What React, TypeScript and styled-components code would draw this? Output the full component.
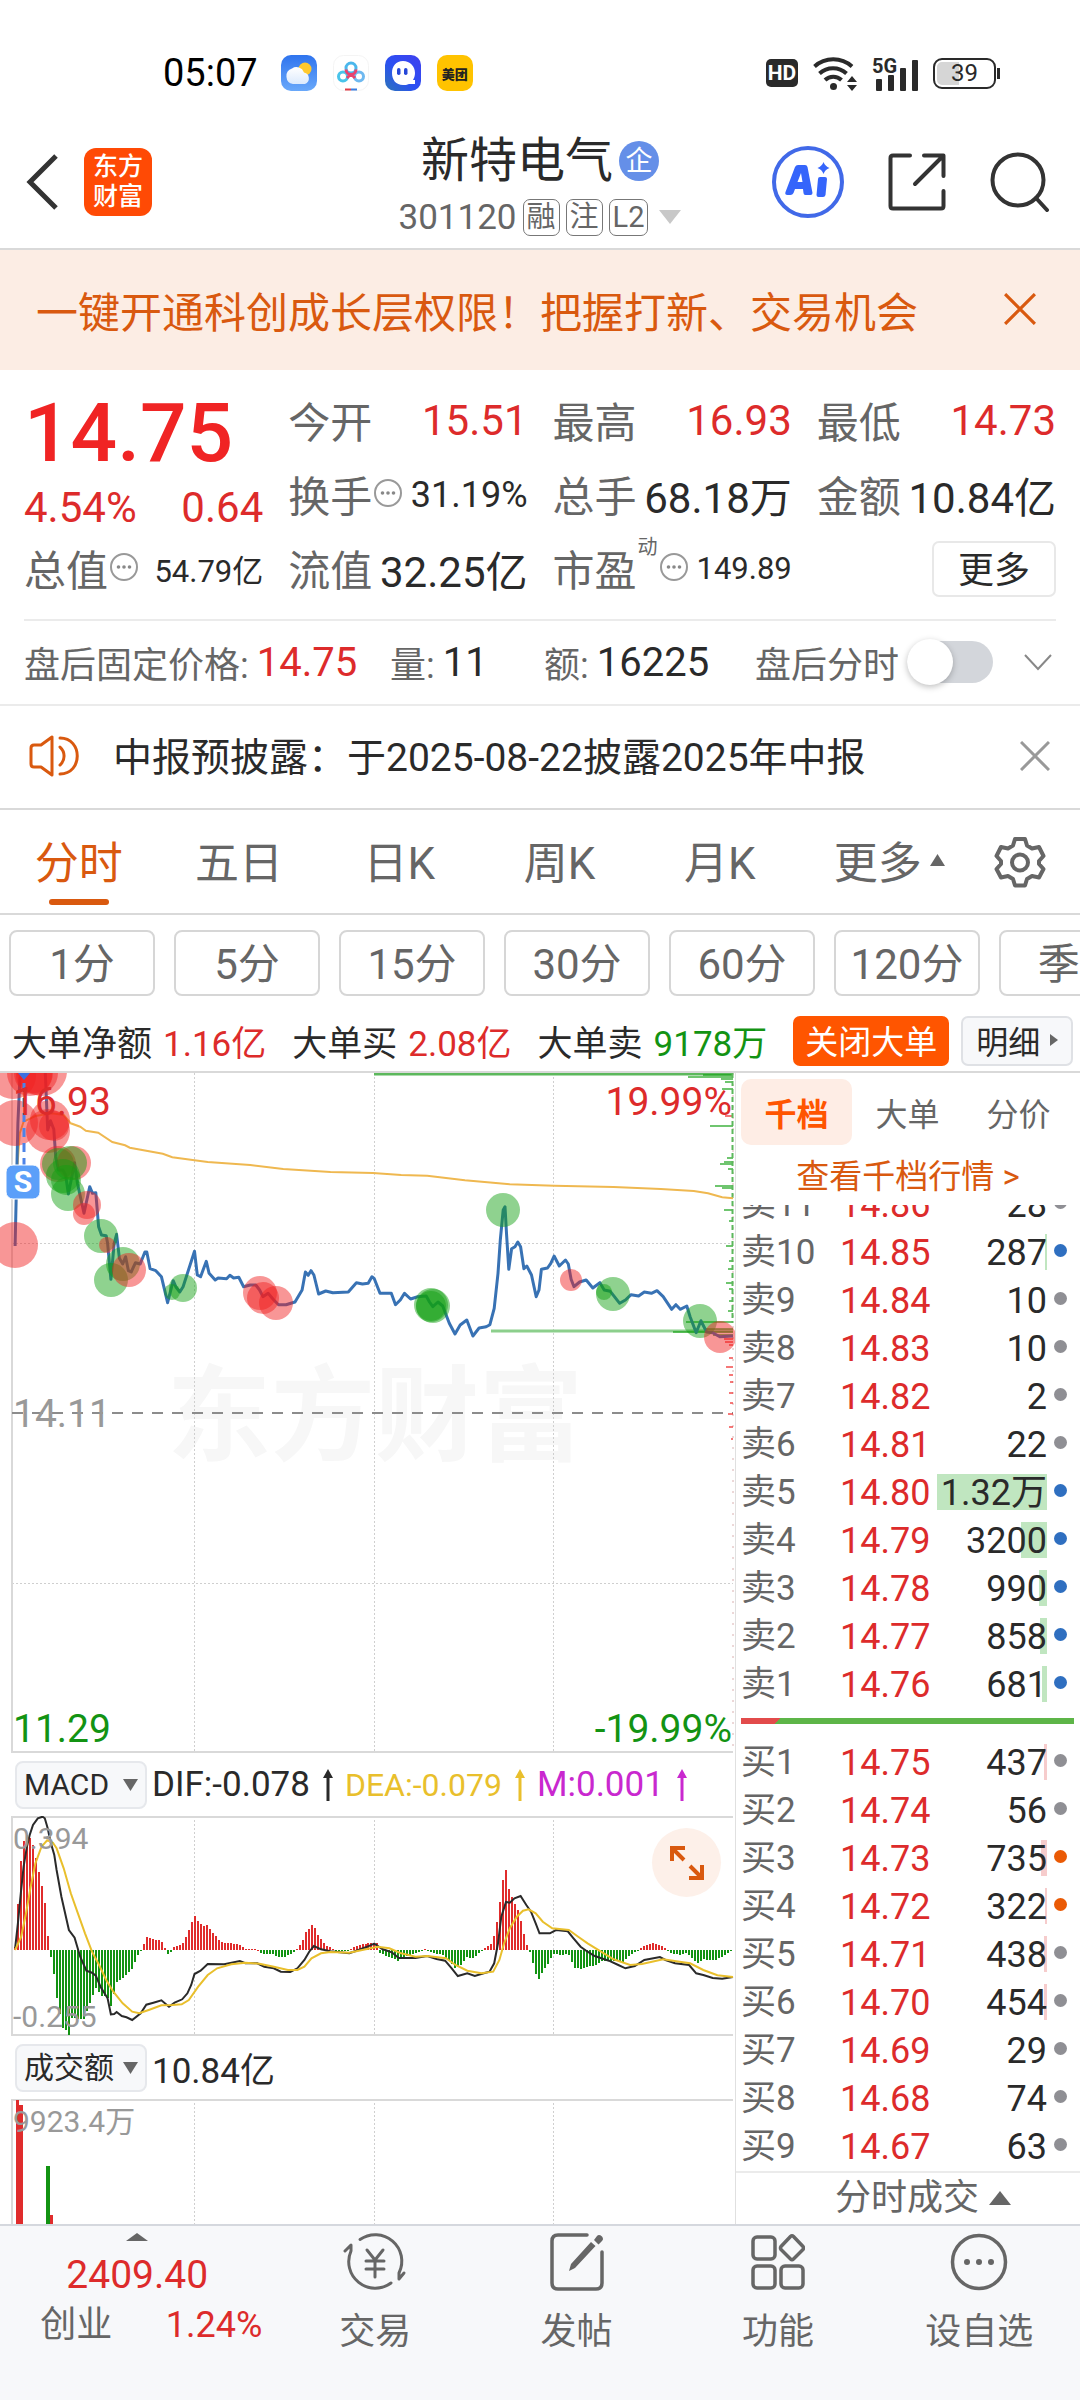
import React from 'react';
import styled, { createGlobalStyle } from 'styled-components';

const c = {
  ink: '#2a2a2a',
  mid: '#666666',
  soft: '#999999',
  red: '#dd2b2b',
  green: '#139313',
  orange: '#d9590f',
  vivid: '#ff5500',
  line: '#e0e0e0',
  panel: '#f7f8fa',
};

const GlobalStyle = createGlobalStyle`
  * { box-sizing: border-box; }
  body {
    margin: 0;
    background: #fff;
    color: ${c.ink};
    font-family: Roboto, "Noto Sans CJK SC", sans-serif;
    overflow-x: hidden;
  }
  button, select, input { font: inherit; color: inherit; margin: 0; padding: 0; border: 0; background: none; }
  button { display: inline-flex; align-items: center; justify-content: center; cursor: pointer; white-space: nowrap; }
  svg { display: block; flex: none; }
  h1, p, dl, dd, dt { margin: 0; font-weight: 400; }
`;

const Page = styled.div`
  display: flex;
  flex-direction: column;
  min-height: 100vh;
  overflow: hidden;
`;

/* ---------- status bar ---------- */
const StatusBar = styled.div`
  display: flex;
  justify-content: space-between;
  align-items: center;
  height: 116px;
  padding: 30px 80px 0 163px;
`;
const StatusGroup = styled.div<{ $gap: number }>`
  display: flex;
  align-items: center;
  gap: ${(p) => p.$gap}px;
`;
const Clock = styled.span`
  margin-right: 7px;
  color: #000;
  font-size: 38px;
  line-height: 44px;
`;
const AppTile = styled.span`
  display: flex;
  align-items: center;
  justify-content: center;
  width: 36px;
  height: 36px;
  border-radius: 10px;
  background: #ffc300;
  color: #222;
  font-size: 13px;
  font-weight: 900;
`;
const HdTag = styled.span`
  width: 32px;
  border-radius: 5px;
  background: ${c.ink};
  color: #fff;
  font-size: 21px;
  font-weight: 700;
  line-height: 28px;
  text-align: center;
`;
const Battery = styled.span`
  display: flex;
  align-items: center;
  justify-content: center;
  position: relative;
  width: 63px;
  height: 31px;
  margin-right: 4px;
  border: 2px solid ${c.ink};
  border-radius: 9px;
  background: linear-gradient(90deg, #d6d6d6 40%, #fff 40%) padding-box;
  box-shadow: inset 0 0 0 2px #fff;
  font-size: 24px;
  line-height: 27px;
  &::after {
    content: '';
    position: absolute;
    right: -6px;
    top: 8px;
    width: 3px;
    height: 11px;
    background: ${c.ink};
  }
`;

/* ---------- header ---------- */
const Header = styled.header`
  display: grid;
  grid-template-columns: 1fr auto 1fr;
  align-items: center;
  height: 134px;
  padding: 0 30px 0 26px;
  border-bottom: 2px solid #d9d9d9;
`;
const HeaderSide = styled.div<{ $end?: boolean }>`
  display: flex;
  align-items: center;
  gap: ${(p) => (p.$end ? 44 : 25)}px;
  justify-content: ${(p) => (p.$end ? 'flex-end' : 'flex-start')};
`;
const Logo = styled.div`
  display: grid;
  place-content: center;
  width: 68px;
  height: 68px;
  border-radius: 12px;
  background: #ff4a05;
  color: #fff;
  font-size: 25px;
  font-weight: 500;
  line-height: 30px;
  text-align: center;
`;
const TitleBlock = styled.div`
  display: flex;
  flex-direction: column;
  align-items: center;
  padding: 14px 0 0 4px;
`;
const TitleLine = styled.div`
  display: flex;
  align-items: center;
  height: 56px;
`;
const Title = styled.h1`
  font-size: 48px;
  line-height: 56px;
`;
const FirmBadge = styled.span`
  width: 40px;
  margin-left: 6px;
  border-radius: 50%;
  background: #658fe8;
  color: #fff;
  font-size: 27px;
  line-height: 40px;
  text-align: center;
`;
const CodeLine = styled(TitleLine)`
  gap: 6px;
  color: ${c.mid};
  font-size: 35px;
  button { margin-left: 5px; }
`;
const MiniTag = styled.span`
  min-width: 36px;
  padding: 0 3px;
  border: 1px solid #777;
  border-radius: 7px;
  font-size: 29px;
  line-height: 35px;
  text-align: center;
`;

/* ---------- banner and notice ---------- */
const Banner = styled.section`
  display: flex;
  justify-content: space-between;
  align-items: center;
  height: 120px;
  padding: 0 44px 2px 36px;
  background: #fcede4;
  color: ${c.orange};
  font-size: 42px;
`;
const Notice = styled.section`
  display: flex;
  align-items: center;
  height: 104px;
  padding: 0 30px 2px 29px;
  border-bottom: 2px solid #d9d9d9;
  font-size: 39px;
  > svg { margin-right: 32px; }
  span { padding-bottom: 4px; }
  button { margin-left: auto; }
`;

/* ---------- quote ---------- */
const Quote = styled.section`
  margin: 0 24px;
  padding: 14px 0 13px;
  border-bottom: 2px solid #ebebeb;
`;
const QuoteGrid = styled.dl`
  display: grid;
  grid-template-columns: repeat(4, 1fr);
  grid-auto-rows: 74px;
  column-gap: 25px;
`;
const PriceCell = styled.div`
  grid-row: span 2;
  display: flex;
  flex-direction: column;
  color: ${c.red};
`;
const BigPrice = styled.strong`
  color: #f02424;
  font-size: 82px;
  font-weight: 500;
  line-height: 98px;
`;
const Change = styled.span`
  display: flex;
  justify-content: space-between;
  font-size: 42px;
  line-height: 52px;
`;
const Stat = styled.div`
  display: flex;
  align-items: center;
  padding-bottom: 1px;
  white-space: nowrap;
`;
const StatLabel = styled.dt`
  display: flex;
  align-items: center;
  gap: 1px;
  padding-bottom: 2px;
  color: ${c.mid};
  font-size: 42px;
`;
const Dynamic = styled.sup`
  align-self: flex-start;
  font-size: 20px;
  line-height: 20px;
`;
const StatValue = styled.dd<{ $size?: number; $up?: boolean }>`
  margin-left: auto;
  color: ${(p) => (p.$up ? c.red : c.ink)};
  font-size: ${(p) => p.$size ?? 42}px;
`;
const MoreButton = styled.button`
  width: 124px;
  height: 56px;
  margin-left: auto;
  padding-bottom: 3px;
  border: 2px solid #e8e8e8;
  border-radius: 7px;
  font-size: 36px;
`;

const AfterRow = styled.section`
  display: grid;
  grid-template-columns: 366fr 154fr 211fr 301fr;
  align-items: center;
  height: 85px;
  padding: 0 24px 1px;
  border-bottom: 2px solid #ebebeb;
`;
const Pair = styled.span`
  display: flex;
  align-items: center;
  gap: 8px;
  color: ${c.mid};
  font-size: 36px;
  white-space: nowrap;
`;
const PairValue = styled.span<{ $up?: boolean }>`
  color: ${(p) => (p.$up ? c.red : c.ink)};
  font-size: 40px;
`;
const ToggleLabel = styled.label`
  display: flex;
  align-items: center;
  gap: 8px;
`;
const Toggle = styled.input`
  appearance: none;
  position: relative;
  width: 86px;
  height: 42px;
  border-radius: 21px;
  background: #d3d6db;
  &::before {
    content: '';
    position: absolute;
    left: 0;
    top: -2px;
    width: 46px;
    height: 46px;
    border-radius: 50%;
    background: #fff;
    box-shadow: 0 2px 6px rgba(0, 0, 0, 0.25);
  }
`;
const ExpandButton = styled.button`
  margin: 0 4px 0 auto;
`;

/* ---------- period tabs ---------- */
const Periods = styled.nav`
  display: grid;
  grid-template-columns: repeat(5, 160fr) 178fr 80fr;
  height: 105px;
  padding: 0 20px 0 0;
  border-bottom: 2px solid #d9d9d9;
`;
const PeriodTab = styled.button<{ $active?: boolean }>`
  position: relative;
  gap: 8px;
  padding: 0 3px 3px 0;
  color: ${(p) => (p.$active ? c.orange : c.mid)};
  font-size: 44px;
  &::after {
    content: '';
    display: ${(p) => (p.$active ? 'block' : 'none')};
    position: absolute;
    bottom: 8px;
    width: 60px;
    height: 6px;
    border-radius: 3px;
    background: ${c.orange};
  }
`;
const Minutes = styled.div`
  display: flex;
  gap: 19px;
  padding: 15px 0 14px 9px;
`;
const MinuteChip = styled.button`
  flex: 0 0 146px;
  height: 66px;
  padding-bottom: 5px;
  border: 2px solid #d6d6d6;
  border-radius: 8px;
  color: ${c.mid};
  font-size: 42px;
`;

/* ---------- block trade summary ---------- */
const BlockRow = styled.div`
  display: flex;
  align-items: center;
  gap: 26px;
  height: 63px;
  padding: 0 11px 0 12px;
  border-bottom: 2px solid #d9d9d9;
  font-size: 35px;
  white-space: nowrap;
`;
const BlockItem = styled.span`
  display: flex;
  gap: 11px;
`;
const BlockValue = styled.span<{ $tone: string }>`
  color: ${(p) => p.$tone};
`;
const BlockActions = styled.span`
  display: flex;
  gap: 12px;
  margin-left: auto;
`;
const CloseBlock = styled.button`
  width: 156px;
  height: 50px;
  padding-bottom: 2px;
  border-radius: 7px;
  background: ${c.vivid};
  color: #fff;
  font-size: 33px;
`;
const DetailButton = styled.button`
  gap: 10px;
  width: 112px;
  height: 50px;
  padding-bottom: 2px;
  border: 2px solid #dfe1e5;
  border-radius: 7px;
  background: ${c.panel};
  font-size: 32px;
`;

/* ---------- charts ---------- */
const Board = styled.main`
  display: grid;
  grid-template-columns: 735fr 345fr;
`;
const Charts = styled.div`
  display: flex;
  flex-direction: column;
  min-width: 0;
`;
const Panel = styled.div<{ $height: number }>`
  position: relative;
  height: ${(p) => p.$height}px;
  overflow: hidden;
  svg.plot { position: relative; width: 100%; height: 100%; }
`;
const AxisText = styled.span<{ $tone: string; $small?: boolean; $right?: boolean; $top: number }>`
  position: absolute;
  top: ${(p) => p.$top}px;
  ${(p) => (p.$right ? 'right: 3px;' : 'left: 13px;')}
  color: ${(p) => p.$tone};
  font-size: ${(p) => (p.$small ? 30 : 39)}px;
  line-height: 46px;
`;
const Watermark = styled.span`
  position: absolute;
  top: 275px;
  left: 167px;
  color: #f7f7f7;
  font-size: 104px;
  font-weight: 700;
  line-height: 140px;
  white-space: nowrap;
`;
const FullButton = styled.button`
  position: absolute;
  right: 14px;
  top: 12px;
  width: 69px;
  height: 69px;
  border-radius: 50%;
  background: #fdf0e9;
`;
const IndicatorRow = styled.div`
  display: flex;
  align-items: center;
  gap: 5px;
  height: 63px;
  padding-left: 15px;
  font-size: 35px;
  white-space: nowrap;
`;
const SelectBox = styled.label`
  display: flex;
  align-items: center;
  position: relative;
  svg { position: absolute; right: 9px; pointer-events: none; }
`;
const IndicatorSelect = styled.select`
  appearance: none;
  width: 132px;
  height: 48px;
  padding-left: 7px;
  border: 2px solid #e6e8ec;
  border-radius: 8px;
  background: ${c.panel};
  font-size: 30px;
`;
const Reading = styled.span<{ $tone: string; $size?: number }>`
  display: flex;
  align-items: center;
  gap: 13px;
  margin-right: 7px;
  color: ${(p) => p.$tone};
  font-size: ${(p) => p.$size ?? 35}px;
`;

/* ---------- order book ---------- */
const Book = styled.aside`
  display: flex;
  flex-direction: column;
  min-width: 0;
  border-left: 1px solid ${c.line};
`;
const BookTabs = styled.div`
  display: grid;
  grid-template-columns: repeat(3, 1fr);
  padding: 6px 6px 0 5px;
`;
const BookTab = styled.button<{ $active?: boolean }>`
  height: 66px;
  border-radius: 10px;
  background: ${(p) => (p.$active ? '#feede5' : 'transparent')};
  color: ${(p) => (p.$active ? c.vivid : c.mid)};
  font-size: 32px;
  font-weight: ${(p) => (p.$active ? 700 : 400)};
`;
const BookLink = styled.a`
  height: 60px;
  color: ${c.orange};
  font-size: 33px;
  line-height: 64px;
  text-align: center;
  text-decoration: none;
`;
const Asks = styled.div`
  display: flex;
  flex-direction: column;
  justify-content: flex-end;
  height: 504px;
  overflow: hidden;
`;
const Ladder = styled.table`
  width: 100%;
  table-layout: fixed;
  border-collapse: collapse;
  font-size: 36px;
  line-height: 48px;
  th, td { padding: 0; height: 48px; font-weight: 400; }
  th { width: 98px; padding-left: 5px; color: ${c.mid}; font-size: 35px; text-align: left; white-space: nowrap; }
  td:nth-child(2) { padding-left: 6px; }
  td:last-child { width: 33px; }
`;
const LadderPrice = styled.td`
  width: 102px;
  color: ${c.red};
`;
const Qty = styled.td`
  position: relative;
  text-align: right;
  span { position: relative; }
`;
const Depth = styled.i<{ $buy?: boolean }>`
  position: absolute;
  right: 0;
  top: 5px;
  height: 36px;
  background: ${(p) => (p.$buy ? '#f6cccc' : '#c0e6c0')};
`;
const Dot = styled.i<{ $tone: string }>`
  display: block;
  width: 13px;
  height: 13px;
  margin: 0 0 6px 7px;
  border-radius: 50%;
  background: ${(p) => p.$tone};
`;
const Balance = styled.div`
  height: 6px;
  margin: 9px 6px 15px 5px;
  background: linear-gradient(135deg, #e24b4b 28px, #5db548 28px);
`;
const TradesButton = styled.button`
  flex: 1;
  gap: 10px;
  padding: 0 0 2px 30px;
  border-top: 2px solid #ebebeb;
  color: ${c.mid};
  font-size: 36px;
  line-height: 46px;
`;

/* ---------- bottom bar ---------- */
const BottomBar = styled.footer`
  display: grid;
  grid-template-columns: 274fr repeat(4, 201fr);
  flex: 1;
  border-top: 2px solid #d5d8de;
  background: ${c.panel};
`;
const IndexCell = styled.button`
  flex-direction: column;
  justify-content: flex-start;
  padding-top: 7px;
  color: ${c.red};
  font-size: 39px;
  line-height: 48px;
`;
const IndexValue = styled.span`
  margin-top: 10px;
`;
const IndexRow = styled.span`
  display: flex;
  justify-content: space-between;
  width: 222px;
  margin: 2px 0 0 28px;
  font-size: 36px;
`;
const IndexName = styled.span`
  color: ${c.mid};
`;
const BottomItem = styled.button`
  flex-direction: column;
  justify-content: flex-start;
  gap: 16px;
  padding-top: 6px;
  color: ${c.mid};
  font-size: 36px;
  line-height: 48px;
`;

/* ---------- small drawings ---------- */
const Tri = ({ w, h, fill = c.mid, up, right }: { w: number; h: number; fill?: string; up?: boolean; right?: boolean }) => (
  <svg width={w} height={h} viewBox={`0 0 ${w} ${h}`} fill={fill} aria-hidden>
    <path d={right ? `M0 0L${w} ${h / 2}L0 ${h}z` : up ? `M0 ${h}L${w / 2} 0L${w} ${h}z` : `M0 0H${w}L${w / 2} ${h}z`} />
  </svg>
);
const Cross = ({ size, tone, w = 3 }: { size: number; tone: string; w?: number }) => (
  <svg width={size} height={size} viewBox="0 0 30 30" stroke={tone} strokeWidth={w} fill="none">
    <path d="M1 1L29 29M29 1L1 29" />
  </svg>
);
const Info = () => (
  <svg width="30" height="30" viewBox="0 0 30 30" fill="none" stroke="#999" strokeWidth="2">
    <circle cx="15" cy="14" r="13" />
    <g fill="#888" stroke="none">
      <circle cx="9.500" cy="14" r="1.8" /><circle cx="15" cy="14" r="1.8" /><circle cx="20.500" cy="14" r="1.8" />
    </g>
  </svg>
);
const Arrow = () => (
  <svg width="10" height="32" viewBox="0 0 10 32" fill="currentColor">
    <path d="M5 0L10 9H6.5V32H3.5V9H0z" />
  </svg>
);

const WeatherIcon = () => (
  <svg width="36" height="36" viewBox="0 0 36 36">
    <defs>
      <linearGradient id="sky" x1="0" y1="0" x2="0" y2="1"><stop stopColor="#2f74ee" /><stop offset="1" stopColor="#69a8fa" /></linearGradient>
      <linearGradient id="cloud" x1="0" y1="0" x2="0" y2="1"><stop stopColor="#fff" /><stop offset="1" stopColor="#dceafd" /></linearGradient>
    </defs>
    <rect width="36" height="36" rx="10" fill="url(#sky)" />
    <circle cx="24" cy="14" r="6.5" fill="#ffc92e" />
    <path d="M12 29a8 8 0 0 1-1-15.500a8 8 0 0 1 12 4a6 6 0 0 1 1 11.500z" fill="url(#cloud)" />
  </svg>
);
const DiskIcon = () => (
  <svg width="36" height="36" viewBox="0 0 36 36" fill="none" strokeWidth="3">
    <rect x=".5" y=".5" width="35" height="35" rx="10" stroke="#f4f4f4" strokeWidth="1" />
    <circle cx="10" cy="21.500" r="4.500" stroke="#49c4ea" />
    <circle cx="26" cy="21.500" r="4.500" stroke="#6fb9f0" />
    <circle cx="18" cy="13" r="5" stroke="#4ab7ec" />
    <path d="M13 14.500a5 5 0 0 0 10 0M18 19l-4 4M18 19l4 4" stroke="#e8426f" />
    <path d="M12 34.500h6" stroke="#e23c46" strokeWidth="2" /><path d="M18 34.500h6" stroke="#3a7fe0" strokeWidth="2" />
  </svg>
);
const GhostIcon = () => (
  <svg width="36" height="36" viewBox="0 0 36 36">
    <defs><linearGradient id="gh" x1="0" y1="1" x2="1" y2="0"><stop stopColor="#2d75b8" /><stop offset=".45" stopColor="#2b50f2" /><stop offset="1" stopColor="#4040ef" /></linearGradient></defs>
    <rect width="36" height="36" rx="10" fill="url(#gh)" />
    <path d="M18 6c7 0 12 5 12 12c0 3-1 5-2 7h2v4h-6c-2 1-4 1-6 1C11 30 7 25 7 18S11 6 18 6z" fill="#fff" />
    <rect x="12" y="13" width="3.500" height="7" rx="1.700" fill="#2546d8" /><rect x="19" y="13" width="3.500" height="7" rx="1.700" fill="#2546d8" />
  </svg>
);
const WifiIcon = () => (
  <svg width="44" height="35" viewBox="0 0 44 35" fill="none" stroke={c.ink} strokeWidth="4">
    <path d="M1.500 10.500a28 28 0 0 1 37.500 0" /><path d="M6.500 17.500a20 20 0 0 1 27 0" /><path d="M12 24a12 12 0 0 1 16.500 0" />
    <g fill={c.ink} stroke="none"><circle cx="20.500" cy="30.500" r="3.500" /><path d="M39 20l5 6h-10zM39 35l5-6h-10z" /></g>
  </svg>
);
const SignalIcon = () => (
  <svg width="46" height="36" viewBox="1 0 46 36" fill={c.ink}>
    <rect x="5" y="24" width="6" height="12" rx="1" /><rect x="17" y="20" width="6" height="16" rx="1" />
    <rect x="29" y="13" width="6" height="23" rx="1" /><rect x="41" y="5" width="6" height="31" rx="1" />
    <text x="1" y="18" fontSize="20" fontWeight="700" fontFamily="Roboto, sans-serif">5G</text>
  </svg>
);
const BackIcon = () => (
  <svg width="33" height="56" viewBox="0 0 33 56" fill="none" stroke="#333" strokeWidth="5">
    <path d="M30 2L4 28L30 54" />
  </svg>
);
const AiIcon = () => (
  <svg width="72" height="72" viewBox="0 0 72 72" fill="#3565fb">
    <circle cx="36" cy="36" r="34" fill="none" stroke="#4169e8" strokeWidth="4" />
    <path fillRule="evenodd" d="M23 21q1-2 3-2h7q2 0 2.500 2l5 26q0 2-2 2h-5q-2 0-2-2l-.5-4h-8l-1.500 4q-1 2-3 2h-3q-3 0-2-3zM25.500 36h5l-1.500-9z" />
    <path d="M46 33q0-2 2-2h5q2 0 2 2l-1.500 16q-.5 2-2.500 2h-4.500q-2 0-2-2zM51.500 16q1.500 4 6 6q-4.500 1.500-6 6q-1.500-4.500-6-6q4.500-2 6-6z" />
  </svg>
);
const ShareIcon = () => (
  <svg width="58" height="58" viewBox="0 0 58 58" fill="none" stroke="#333" strokeWidth="4" strokeLinecap="round" strokeLinejoin="round">
    <path d="M22 2.500H5Q2.500 2.500 2.500 5V53Q2.500 55.500 5 55.500H53Q55.500 55.500 55.500 53V38M36 2.500H55.500V23M54 4L27 31" />
  </svg>
);
const SearchIcon = () => (
  <svg width="60" height="60" viewBox="0 0 60 60" fill="none" stroke="#333" strokeWidth="4" strokeLinecap="round">
    <circle cx="28" cy="28" r="25.500" /><path d="M46 46L57 58" />
  </svg>
);
const SpeakerIcon = () => (
  <svg width="52" height="42" viewBox="0 0 52 42" fill="none" stroke={c.orange} strokeWidth="3" strokeLinejoin="round" strokeLinecap="round">
    <path d="M23 2V40L12 32H5Q2 32 2 29V13Q2 10 5 10H12z" /><path d="M31 12a12 12 0 0 1 0 18" /><path d="M31 3C54 3 54 39 31 39" />
  </svg>
);
const ChevronIcon = () => (
  <svg width="28" height="17" viewBox="0 0 28 17" fill="none" stroke="#888" strokeWidth="2"><path d="M1 1L14 15L27 1" /></svg>
);
const GearIcon = () => (
  <svg width="52" height="52" viewBox="0 0 52 52" fill="none" stroke={c.mid} strokeWidth="4" strokeLinejoin="round">
    <path d="M21 3H31L33 9.500L38 12.500L45 11L49.500 20L45 25V28L49.500 33L45 41.500L38 40L33 43L31 49.500H21L19 43L14 40L7 41.500L2.500 33L7 28V25L2.500 20L7 11L14 12.500L19 9.500z" />
    <circle cx="26" cy="26.500" r="8" />
  </svg>
);
const FullIcon = () => (
  <svg width="34" height="34" viewBox="0 0 34 34" fill="none" stroke={c.orange} strokeWidth="4">
    <path d="M2 15V2H15M2 2L14 14M32 19V32H19M32 32L20 20" />
  </svg>
);

const TradeIcon = () => (
  <svg width="66" height="60" viewBox="0 0 66 60" fill="none" stroke={c.mid} strokeWidth="3" strokeLinecap="round" strokeLinejoin="round">
    <path d="M18 7.500A26.500 26.500 0 0 1 57 41V47L62 41" />
    <path d="M49 51A26.500 26.500 0 0 1 9 19V13L3 19" />
    <path d="M25 18L33 28L41 18M33 28V45M24 29H42M24 37H42" />
  </svg>
);
const PostIcon = () => (
  <svg width="56" height="60" viewBox="0 0 56 60" fill="none" stroke={c.mid} strokeWidth="3.500" strokeLinecap="round">
    <path d="M38 3H9Q3 3 3 9V51Q3 57 9 57H47Q53 57 53 51V20" />
    <g fill={c.mid} stroke="none"><path d="M42 10L46.500 14L26 36L20 39L22 32zM48 4Q50 2 53 4.500Q55 7 53 9L49.500 12.500L45 8z" /></g>
  </svg>
);
const ToolsIcon = () => (
  <svg width="54" height="60" viewBox="0 0 54 60" fill="none" stroke={c.mid} strokeWidth="3.500" strokeLinejoin="round">
    <rect x="2" y="5" width="22" height="22" rx="4" /><rect x="2" y="34" width="22" height="22" rx="4" /><rect x="30" y="34" width="22" height="22" rx="4" />
    <path d="M39.500 4.500Q41 3 42.500 4.500L52 14.500Q53 16 52 17.500L42.500 27Q41 28.500 39.500 27L30 17.500Q29 16 30 14.500z" />
  </svg>
);
const DotsIcon = () => (
  <svg width="58" height="60" viewBox="0 0 58 60" fill="none" stroke={c.mid} strokeWidth="3.500">
    <circle cx="29" cy="30" r="26.500" />
    <g fill={c.mid} stroke="none"><circle cx="17" cy="30" r="3" /><circle cx="29" cy="30" r="3" /><circle cx="41" cy="30" r="3" /></g>
  </svg>
);

/* ---------- chart data: series are sampled on a 1568-unit wide, 3x tall grid ---------- */
type Pt = [number, number];
const parse = (s: string): Pt[] => s.trim().split(/\s+/).map((p) => p.split(',').map(Number) as Pt);
const X = (x: number) => x * 0.472;
const trace = (s: string, top: number) => parse(s).map(([x, y]) => `${X(x).toFixed(1)},${((y - top) / 3).toFixed(1)}`).join(' ');

const OPENING = '32,558 38,190 42,60 46,39 50,20 90,20 96,39 101,210 107,182 114,208 118,290 124,330 133,330 139,345 145,402 158,308 164,370 178,460 190,380 196,400 203,398 209,500 215,525 225,527 228,550 235,658 242,550 247,523 253,595 260,612 266,590 272,632 278,636 287,608 297,612 307,576 311,576 318,626 330,632 342,650 355,728 367,662 373,682 381,696 388,680 412,574 418,645 425,650 437,604 443,640 456,660 462,654 480,656 487,646 495,654 506,652 516,680 530,675 542,675 550,690 557,710 568,700 580,720 590,734 606,734 625,726 640,690 647,636 653,646 659,632 665,645 675,702 690,693 705,698 738,696 755,668 768,672 780,670 788,650 793,656 805,700 829,700 838,734 848,720 857,700 870,717 885,710 903,708 910,726 917,740 928,726 938,738 952,790 964,822 975,795 989,780 1002,828 1015,804 1030,800 1038,794 1047,745 1055,640 1060,540 1066,450 1070,440 1073,520 1078,628 1084,566 1091,560 1097,546 1103,560 1110,626 1116,618 1126,645 1136,710 1142,690 1147,628 1160,624 1167,610 1174,588 1185,618 1198,600 1204,612 1210,658 1216,680 1228,666 1242,660 1256,684 1271,668 1280,690 1293,694 1313,730 1325,720 1337,704 1353,708 1365,696 1380,700 1392,692 1405,710 1423,748 1432,734 1441,748 1455,738 1462,770 1475,818 1485,782 1497,816 1510,818 1525,830 1553,828';
const AVERAGE = '34,420 38,300 42,220 50,185 75,168 110,160 135,165 150,190 170,200 182,212 208,218 238,246 265,256 275,263 345,281 365,292 412,301 440,306 530,315 600,327 700,336 790,339 850,345 905,347 985,361 1080,373 1174,377 1300,381 1400,387 1470,393 1500,400 1530,412 1553,415';
const DIF = '32,595 38,520 44,430 50,350 57,290 63,255 70,225 80,205 90,200 95,205 101,235 107,275 115,315 120,360 130,440 146,540 158,563 170,620 183,662 195,668 203,677 213,710 228,745 235,793 242,792 247,786 258,798 268,802 280,810 298,790 310,764 325,758 342,751 358,770 370,758 386,748 397,730 405,705 412,672 425,662 440,642 475,643 508,633 520,640 545,640 560,650 580,655 595,665 615,666 630,655 645,630 655,605 665,588 680,598 700,604 740,610 755,602 775,592 793,581 810,597 830,607 845,624 880,624 905,618 925,627 943,632 957,655 970,678 990,670 1006,678 1025,670 1037,665 1047,640 1055,580 1062,500 1072,456 1080,458 1090,445 1103,438 1115,465 1125,485 1135,520 1143,550 1165,550 1178,540 1203,544 1215,565 1230,590 1245,605 1260,618 1290,632 1310,645 1325,655 1345,648 1365,630 1398,621 1410,630 1430,640 1460,645 1475,670 1490,675 1510,684 1530,686 1553,681';
const DEA = '32,600 45,560 55,490 65,410 75,340 88,290 100,271 112,278 120,295 135,355 150,430 165,490 180,550 195,605 210,645 225,690 240,725 260,760 280,785 295,790 315,780 342,766 365,765 385,763 400,750 420,710 440,675 460,655 490,643 520,638 550,641 580,650 610,660 630,660 645,650 660,625 680,610 700,606 740,608 775,598 800,590 825,595 850,610 880,620 905,618 945,625 965,645 990,662 1020,670 1045,665 1058,630 1068,580 1080,535 1095,500 1108,482 1120,478 1135,490 1150,515 1170,535 1205,540 1225,560 1245,580 1270,602 1300,628 1335,645 1360,642 1405,628 1440,635 1462,640 1490,660 1520,676 1553,681';
const HIST = '32,590 38,470 44,342 50,275 57,255 63,260 70,285 76,320 82,362 89,408 95,450 101,550 107,612 114,665 120,738 127,790 133,835 139,838 146,857 152,805 160,805 178,808 184,785 190,760 203,712 215,738 228,740 235,768 241,735 247,697 260,686 280,656 290,620 298,605 305,580 311,562 325,568 342,573 350,595 355,611 361,608 368,590 386,582 399,545 405,520 412,497 418,512 430,530 437,522 450,547 465,572 480,580 505,581 520,598 545,598 555,612 575,612 590,620 605,620 625,603 633,588 640,573 647,547 653,538 659,526 665,528 672,553 680,570 690,585 705,598 715,603 738,603 750,590 765,582 790,578 800,580 806,608 820,618 845,632 860,620 885,608 900,598 905,598 915,608 940,615 955,635 965,655 975,650 990,620 1002,625 1020,605 1030,593 1042,580 1047,560 1053,520 1059,465 1066,392 1072,354 1078,412 1084,435 1091,460 1097,477 1103,505 1110,550 1116,580 1123,605 1129,635 1135,668 1141,690 1148,670 1160,645 1172,612 1190,615 1205,612 1217,652 1230,657 1262,645 1275,632 1320,635 1340,610 1350,602 1362,590 1385,579 1405,590 1420,610 1440,614 1455,608 1477,640 1490,628 1515,630 1540,612 1553,600';

const histKnots = parse(HIST);
const histBars = Array.from({ length: 240 }, (_, i) => {
  const x = 32 + i * 6.345;
  const k = Math.max(1, histKnots.findIndex(([kx]) => kx >= x));
  const [x0, y0] = histKnots[k - 1];
  const [x1, y1] = histKnots[k];
  return { x: Math.round(X(x)), v: (600 - (y0 + ((y1 - y0) * (x - x0)) / (x1 - x0))) / 3 };
});

const R = '#f02020';
const G = '#10a010';
const bubbles: [number, number, number, string][] = [
  [13, 3, 23, R], [30, 0, 23, R], [36, 0, 22, R], [42, -2, 25, R], [34, 2, 18, R],
  [15, 50, 23, R], [48, 58, 22, R], [50, 47, 20, R], [54, 53, 15, R], [15, 172, 23, R],
  [58, 91, 18, R], [58, 91, 16, G], [74, 90, 17, R], [70, 90, 17, G], [63, 103, 17, G], [66, 107, 15, G], [68, 121, 17, G],
  [87, 132, 14, R], [84, 141, 11, R], [101, 163, 17, G], [107, 172, 8, R], [123, 191, 17, G], [111, 207, 17, G],
  [129, 197, 17, R], [172, 219, 8, G], [183, 215, 14, G],
  [260, 220, 17, R], [263, 225, 16, R], [276, 230, 17, R],
  [431, 232, 17, G], [433, 233, 17, G], [431, 233, 15, G], [503, 137, 17, G], [571, 207, 11, R],
  [604, 219, 8, G], [613, 221, 17, G], [700, 248, 17, G], [720, 264, 16, R],
];

/* resting volume by price on the right edge: [y, length, colour] */
const rests: [number, number, string][] = [
  [2, 30, G], [4, 45, G], [6, 12, G], [9, 8, G], [16, 11, G], [43, 8, R], [53, 23, G], [85, 6, G], [89, 9, G], [91, 13, G], [96, 5, G],
  [113, 18, G], [115, 11, G], [137, 9, G], [148, 4, G], [173, 7, G], [188, 4, G], [196, 5, G], [210, 7, G], [216, 4, G],
  [228, 4, G], [238, 5, G], [249, 47, G], [256, 28, G], [259, 60, G], [262, 20, G],
  [266, 9, R], [269, 8, R], [272, 4, R], [285, 4, R], [294, 7, R], [302, 4, R], [309, 3, R], [320, 4, R], [330, 3, R], [341, 5, R], [354, 4, R], [366, 2, R],
];

const Grid = ({ h, rows = [] }: { h: number; rows?: number[] }) => (
  <g stroke="#cfcfcf" strokeWidth="1" strokeDasharray="2 2" fill="none">
    {[194.5, 374.5, 553.5].map((x) => <path key={x} d={`M${x} 0V${h}`} />)}
    {rows.map((y) => <path key={y} d={`M12 ${y}H733`} />)}
  </g>
);

const PricePlot = () => (
  <svg className="plot" viewBox="0 0 735 680" preserveAspectRatio="none">
    <Grid h={680} rows={[170.5, 510.5]} />
    <path d="M12 0V679H733" fill="none" stroke="#d9d9d9" strokeWidth="2" />
    <path d="M733 0V679" stroke="#d9b0b0" strokeWidth="1" strokeDasharray="2 9" />
    <path d="M12 340H733" stroke="#8c8c8c" strokeWidth="2" strokeDasharray="11 9" />
    <g strokeWidth="2">
      <path d="M374 1H733" stroke="#5cb85c" strokeWidth="3" />
      <path d="M491 258H733" stroke="#8ccf8c" strokeWidth="3" />
      {rests.map(([y, len, tone]) => <path key={y} d={`M${733 - len} ${y}H733`} stroke={tone} opacity=".6" />)}
      <path d="M732.500 0V250" stroke="#5cb85c" strokeDasharray="5 3" />
    </g>
    <polyline points={trace(AVERAGE, 39)} fill="none" stroke="#efb850" strokeWidth="2" />
    <polyline points={trace(OPENING, 39)} fill="none" stroke="#3872b4" strokeWidth="3" strokeLinejoin="round" />
    {bubbles.map(([x, y, r, tone], i) => <circle key={i} cx={x} cy={y} r={r} fill={tone} fillOpacity=".47" />)}
    <path d="M18 0H30L24 7z" fill="#3d6fe0" />
    <path d="M24 10V92" stroke="#4d83e8" strokeWidth="3" strokeDasharray="9 6" />
    <rect x="6" y="92" width="34" height="34" rx="7" fill="#5b9ff9" stroke="#fff" />
    <text x="23" y="119" fill="#fff" fontSize="30" fontWeight="700" textAnchor="middle" fontFamily="Roboto, sans-serif">S</text>
  </svg>
);

const MacdPlot = () => (
  <svg className="plot" viewBox="0 0 735 220" preserveAspectRatio="none">
    <Grid h={220} />
    <path d="M733 1H12V219H733" fill="none" stroke="#d9d9d9" strokeWidth="2" />
    <g shapeRendering="crispEdges">
      {histBars.map(({ x, v }, i) => (
        <rect key={i} x={x - 1} width="2" y={v > 0 ? 134 - v : 134} height={Math.max(1, Math.abs(v))} fill={v > 0 ? '#e02c2c' : '#129312'} />
      ))}
    </g>
    <polyline points={trace(DIF, 198)} fill="none" stroke="#2a2a2a" strokeWidth="2" />
    <polyline points={trace(DEA, 198)} fill="none" stroke="#e9bf2c" strokeWidth="2" />
  </svg>
);

const TurnoverPlot = () => (
  <svg className="plot" viewBox="0 0 735 125" preserveAspectRatio="none">
    <Grid h={125} />
    <path d="M733 1H12V125" fill="none" stroke="#d9d9d9" strokeWidth="2" />
    <g fill="#e02c2c">
      <rect x="16" y="1" width="3" height="124" /><rect x="19" y="6" width="4" height="119" /><rect x="50" y="116" width="3" height="9" />
    </g>
    <rect x="46" y="67" width="4" height="58" fill="#129312" />
  </svg>
);

/* ---------- order book data ---------- */
const BLUE = '#2f6fc0';
const GREY = '#8f8f94';
const HOT = '#ea5a05';
type Level = [string, string, string, string, number];
const asks: Level[] = [
  ['卖11', '14.86', '28', GREY, 0], ['卖10', '14.85', '287', BLUE, 2], ['卖9', '14.84', '10', GREY, 0], ['卖8', '14.83', '10', GREY, 0],
  ['卖7', '14.82', '2', GREY, 0], ['卖6', '14.81', '22', GREY, 0], ['卖5', '14.80', '1.32万', BLUE, 110], ['卖4', '14.79', '3200', BLUE, 26],
  ['卖3', '14.78', '990', BLUE, 8], ['卖2', '14.77', '858', BLUE, 7], ['卖1', '14.76', '681', BLUE, 5],
];
const bids: Level[] = [
  ['买1', '14.75', '437', GREY, 3], ['买2', '14.74', '56', GREY, 0], ['买3', '14.73', '735', HOT, 6], ['买4', '14.72', '322', HOT, 2],
  ['买5', '14.71', '438', GREY, 3], ['买6', '14.70', '454', GREY, 3], ['买7', '14.69', '29', GREY, 0], ['买8', '14.68', '74', GREY, 0], ['买9', '14.67', '63', GREY, 0],
];
const Levels = ({ rows, buy, label }: { rows: Level[]; buy?: boolean; label: string }) => (
  <Ladder aria-label={label}>
    <tbody>
      {rows.map(([name, price, qty, tone, depth]) => (
        <tr key={name}>
          <th scope="row">{name}</th>
          <LadderPrice>{price}</LadderPrice>
          <Qty>
            {depth > 0 && <Depth $buy={buy} style={{ width: depth }} />}
            <span>{qty}</span>
          </Qty>
          <td><Dot $tone={tone} /></td>
        </tr>
      ))}
    </tbody>
  </Ladder>
);

export default function App() {
  return (
    <Page>
      <GlobalStyle />
      <StatusBar>
        <StatusGroup $gap={16}>
          <Clock>05:07</Clock>
          <WeatherIcon />
          <DiskIcon />
          <GhostIcon />
          <AppTile>美团</AppTile>
        </StatusGroup>
        <StatusGroup $gap={15}>
          <HdTag>HD</HdTag>
          <WifiIcon />
          <SignalIcon />
          <Battery>39</Battery>
        </StatusGroup>
      </StatusBar>

      <Header>
        <HeaderSide>
          <button aria-label="返回"><BackIcon /></button>
          <Logo>东方<br />财富</Logo>
        </HeaderSide>
        <TitleBlock>
          <TitleLine><Title>新特电气</Title><FirmBadge>企</FirmBadge></TitleLine>
          <CodeLine>
            301120<MiniTag>融</MiniTag><MiniTag>注</MiniTag><MiniTag>L2</MiniTag>
            <button aria-label="展开"><Tri w={22} h={14} fill="#c8c8c8" /></button>
          </CodeLine>
        </TitleBlock>
        <HeaderSide $end>
          <button aria-label="AI"><AiIcon /></button>
          <button aria-label="分享"><ShareIcon /></button>
          <button aria-label="搜索"><SearchIcon /></button>
        </HeaderSide>
      </Header>

      <Banner>
        <span>一键开通科创成长层权限！把握打新、交易机会</span>
        <button aria-label="关闭"><Cross size={32} tone={c.orange} /></button>
      </Banner>

      <Quote>
        <QuoteGrid>
          <PriceCell>
            <BigPrice>14.75</BigPrice>
            <Change><span>4.54%</span><span>0.64</span></Change>
          </PriceCell>
          <Stat><StatLabel>今开</StatLabel><StatValue $up>15.51</StatValue></Stat>
          <Stat><StatLabel>最高</StatLabel><StatValue $up>16.93</StatValue></Stat>
          <Stat><StatLabel>最低</StatLabel><StatValue $up>14.73</StatValue></Stat>
          <Stat><StatLabel>换手<Info /></StatLabel><StatValue $size={36}>31.19%</StatValue></Stat>
          <Stat><StatLabel>总手</StatLabel><StatValue>68.18万</StatValue></Stat>
          <Stat><StatLabel>金额</StatLabel><StatValue>10.84亿</StatValue></Stat>
          <Stat><StatLabel>总值<Info /></StatLabel><StatValue $size={31}>54.79亿</StatValue></Stat>
          <Stat><StatLabel>流值</StatLabel><StatValue>32.25亿</StatValue></Stat>
          <Stat><StatLabel>市盈<Dynamic>动</Dynamic><Info /></StatLabel><StatValue $size={31}>149.89</StatValue></Stat>
          <Stat><MoreButton>更多</MoreButton></Stat>
        </QuoteGrid>
      </Quote>

      <AfterRow>
        <Pair>盘后固定价格:<PairValue $up>14.75</PairValue></Pair>
        <Pair>量:<PairValue>11</PairValue></Pair>
        <Pair>额:<PairValue>16225</PairValue></Pair>
        <Pair>
          <ToggleLabel>盘后分时<Toggle type="checkbox" /></ToggleLabel>
          <ExpandButton aria-label="展开"><ChevronIcon /></ExpandButton>
        </Pair>
      </AfterRow>

      <Notice>
        <SpeakerIcon />
        <span>中报预披露：于2025-08-22披露2025年中报</span>
        <button aria-label="关闭"><Cross size={30} tone="#999" /></button>
      </Notice>

      <Periods>
        <PeriodTab $active>分时</PeriodTab>
        <PeriodTab>五日</PeriodTab>
        <PeriodTab>日K</PeriodTab>
        <PeriodTab>周K</PeriodTab>
        <PeriodTab>月K</PeriodTab>
        <PeriodTab>更多<Tri w={15} h={12} up /></PeriodTab>
        <button aria-label="设置"><GearIcon /></button>
      </Periods>

      <Minutes>
        {['1分', '5分', '15分', '30分', '60分', '120分', '季K'].map((m) => <MinuteChip key={m}>{m}</MinuteChip>)}
      </Minutes>

      <BlockRow>
        <BlockItem>大单净额<BlockValue $tone={c.red}>1.16亿</BlockValue></BlockItem>
        <BlockItem>大单买<BlockValue $tone={c.red}>2.08亿</BlockValue></BlockItem>
        <BlockItem>大单卖<BlockValue $tone={c.green}>9178万</BlockValue></BlockItem>
        <BlockActions>
          <CloseBlock>关闭大单</CloseBlock>
          <DetailButton>明细<Tri w={8} h={12} right /></DetailButton>
        </BlockActions>
      </BlockRow>

      <Board>
        <Charts>
          <Panel $height={680}>
            <Watermark>东方财富</Watermark>
            <PricePlot />
            <AxisText $tone={c.red} $top={6}>16.93</AxisText>
            <AxisText $tone={c.red} $top={6} $right>19.99%</AxisText>
            <AxisText $tone={c.soft} $top={318}>14.11</AxisText>
            <AxisText $tone={c.green} $top={633}>11.29</AxisText>
            <AxisText $tone={c.green} $top={633} $right>-19.99%</AxisText>
          </Panel>
          <IndicatorRow>
            <SelectBox>
              <IndicatorSelect aria-label="指标"><option>MACD</option></IndicatorSelect>
              <Tri w={15} h={12} />
            </SelectBox>
            <Reading $tone={c.ink}>DIF:-0.078<Arrow /></Reading>
            <Reading $tone="#e9bf2c" $size={32}>DEA:-0.079<Arrow /></Reading>
            <Reading $tone="#c928cf">M:0.001<Arrow /></Reading>
          </IndicatorRow>
          <Panel $height={220}>
            <MacdPlot />
            <AxisText $tone={c.soft} $small $top={0}>0.394</AxisText>
            <AxisText $tone={c.soft} $small $top={178}>-0.255</AxisText>
            <FullButton aria-label="全屏"><FullIcon /></FullButton>
          </Panel>
          <IndicatorRow>
            <SelectBox>
              <IndicatorSelect aria-label="副图"><option>成交额</option></IndicatorSelect>
              <Tri w={15} h={12} />
            </SelectBox>
            <Reading $tone={c.ink}>10.84亿</Reading>
          </IndicatorRow>
          <Panel $height={125}>
            <TurnoverPlot />
            <AxisText $tone={c.soft} $small $top={0}>9923.4万</AxisText>
          </Panel>
        </Charts>

        <Book>
          <BookTabs>
            <BookTab $active>千档</BookTab>
            <BookTab>大单</BookTab>
            <BookTab>分价</BookTab>
          </BookTabs>
          <BookLink href="#depth">查看千档行情 &gt;</BookLink>
          <Asks><Levels rows={asks} label="卖盘" /></Asks>
          <Balance />
          <Levels rows={bids} buy label="买盘" />
          <TradesButton>分时成交<Tri w={22} h={14} up /></TradesButton>
        </Book>
      </Board>

      <BottomBar>
        <IndexCell>
          <Tri w={22} h={8} up />
          <IndexValue>2409.40</IndexValue>
          <IndexRow><IndexName>创业</IndexName><span>1.24%</span></IndexRow>
        </IndexCell>
        <BottomItem><TradeIcon />交易</BottomItem>
        <BottomItem><PostIcon />发帖</BottomItem>
        <BottomItem><ToolsIcon />功能</BottomItem>
        <BottomItem><DotsIcon />设自选</BottomItem>
      </BottomBar>
    </Page>
  );
}
